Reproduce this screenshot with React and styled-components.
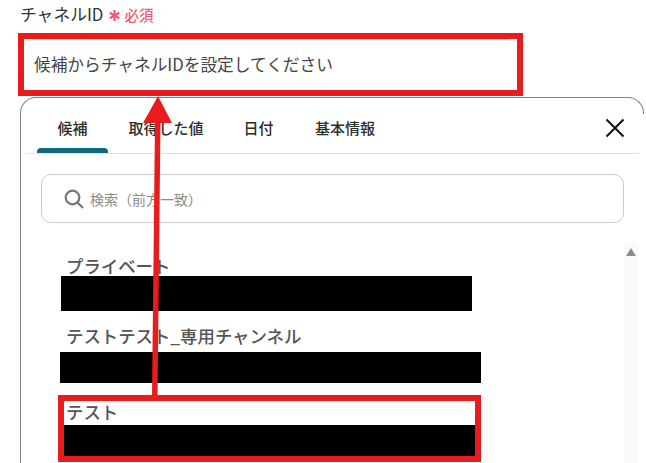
import React from "react";
import styled, { createGlobalStyle } from "styled-components";

const Global = createGlobalStyle`
  html, body { margin: 0; padding: 0; background: #fff; }
  body { width: 646px; height: 463px; overflow: hidden; font-family: "Noto Sans CJK JP", "Noto Sans", sans-serif; }
`;

const Page = styled.div`
  position: relative;
  width: 646px;
  height: 463px;
  overflow: hidden;
  padding: 4px 0 0 18px;
  box-sizing: border-box;
`;

const LabelRow = styled.div`
  display: flex;
  align-items: center;
  height: 22px;
  margin: -1px 0 8px 2px;
  font-size: 16.8px;
  color: #333;
`;

const Star = styled.svg`
  margin: 2px 0 0 6px;
`;

const Required = styled.span`
  color: #f4596f;
  font-size: 14.5px;
  font-weight: 500;
  margin-left: 4px;
`;

const FieldFrame = styled.div`
  width: 505px;
  height: 63px;
  box-sizing: border-box;
  border: 6px solid #e81c1c;
`;

const Field = styled.div`
  height: 100%;
  box-sizing: border-box;
  border-radius: 10px 10px 0 0;
  border-top: 1px solid #dcdcdc;
  padding: 0 0 3px 10px;
  display: flex;
  align-items: center;
  font-size: 16.7px;
  color: #444;
  background: #fff;
`;

const Panel = styled.div`
  position: relative;
  width: 624px;
  height: 380px;
  margin: 1px 0 0 2px;
  box-sizing: border-box;
  border-top: 1px solid #808080;
  border-left: 1px solid #808080;
  border-right: 1px solid #808080;
  border-radius: 16px 16px 0 0;
  padding: 0 4px 0 5px;
  background: #fff;

  &::after {
    content: "";
    position: absolute;
    right: -1px;
    top: 16px;
    bottom: 0;
    width: 1px;
    background: #fff;
  }
`;

const TabBar = styled.div`
  display: flex;
  align-items: stretch;
  height: 55px;
  border-bottom: 1px solid #e2e2e2;
  position: relative;
`;

const Tab = styled.div`
  position: relative;
  display: flex;
  justify-content: center;
  align-items: flex-start;
  padding-top: 19px;
  box-sizing: border-box;
  width: ${(p) => p.$w}px;
  font-size: 15px;
  font-weight: 500;
  color: #2c2c2c;

  ${(p) =>
    p.$active &&
    `&::after {
      content: "";
      position: absolute;
      left: 0;
      right: 0;
      bottom: 0;
      height: 5px;
      background: #0c6b83;
      border-radius: 4px 4px 0 0;
    }`}
`;

const TabSpacer = styled.div`
  width: ${(p) => p.$w}px;
`;

const Close = styled.svg`
  position: absolute;
  right: 14px;
  top: 20px;
`;

const SearchBox = styled.div`
  width: 583px;
  height: 49px;
  margin: 20px 0 0 15px;
  box-sizing: border-box;
  border: 1px solid #cccccc;
  border-radius: 10px;
  display: flex;
  align-items: center;
  padding-left: 22px;
  gap: 6px;
  font-size: 14px;
  color: #8a8a8a;
`;

const ListArea = styled.div`
  position: relative;
  display: flex;
  flex-direction: column;
  padding-top: 32px;
`;

const ListItem = styled.div`
  display: flex;
  flex-direction: column;
  margin-left: ${(p) => p.$left}px;
  margin-top: ${(p) => p.$top}px;
  width: ${(p) => p.$width}px;
`;

const ItemTitle = styled.div`
  font-size: 17.4px;
  font-weight: 500;
  line-height: 22px;
  height: ${(p) => p.$h}px;
  color: #555;
  margin-left: ${(p) => p.$indent}px;
  white-space: nowrap;
`;

const Redacted = styled.div`
  height: ${(p) => p.$h}px;
  background: #000;
`;

const SelectedFrame = styled.div`
  width: 423px;
  height: 67px;
  margin: 12px 0 0 32px;
  box-sizing: border-box;
  border: 6px solid #e81c1c;
  display: flex;
  flex-direction: column;
`;

const Scrollbar = styled.div`
  position: absolute;
  left: 598px;
  top: 20px;
  width: 14px;
  height: 240px;
  background: #fafafa;
  display: flex;
  justify-content: center;
  padding-top: 5px;
  box-sizing: border-box;
`;

const ArrowOverlay = styled.svg`
  position: absolute;
  left: 0;
  top: 0;
  pointer-events: none;
`;

export default function App() {
  return (
    <Page>
      <Global />
      <LabelRow>
        チャネルID
        <Star width="11" height="11" viewBox="0 0 11 11" stroke="#f4596f" strokeWidth="2.2" fill="none">
          <path d="M5.500 0 V11 M0.700 2.700 L10.300 8.300 M10.300 2.700 L0.700 8.300" />
        </Star>
        <Required>必須</Required>
      </LabelRow>
      <FieldFrame>
        <Field>候補からチャネルIDを設定してください</Field>
      </FieldFrame>
      <Panel>
        <TabBar>
          <TabSpacer $w={11} />
          <Tab $w={71} $active>候補</Tab>
          <Tab $w={116}>取得した値</Tab>
          <Tab $w={69}>日付</Tab>
          <Tab $w={104}>基本情報</Tab>
          <Close width="20" height="20" viewBox="0 0 20 20" fill="none" stroke="#111" strokeWidth="2">
            <path d="M1.500 1.500 L18.500 18.500 M18.500 1.500 L1.500 18.500" />
          </Close>
        </TabBar>
        <SearchBox>
          <svg width="20" height="20" viewBox="0 0 20 20" fill="none" stroke="#777" strokeWidth="2.2">
            <circle cx="8.500" cy="8.500" r="6.800" />
            <path d="M13.500 13.500 L19 19" />
          </svg>
          検索（前方一致）
        </SearchBox>
        <ListArea>
          <ListItem $left={35} $top={0} $width={411}>
            <ItemTitle $h={21} $indent={5}>プライベート</ItemTitle>
            <Redacted $h={35} />
          </ListItem>
          <ListItem $left={34} $top={14} $width={421}>
            <ItemTitle $h={27} $indent={6}>テストテスト_専用チャンネル</ItemTitle>
            <Redacted $h={31} />
          </ListItem>
          <SelectedFrame>
            <ItemTitle $h={24} $indent={2}>テスト</ItemTitle>
            <Redacted $h={31} />
          </SelectedFrame>
          <Scrollbar>
            <svg width="10" height="8" viewBox="0 0 10 8" fill="#8c8c8c">
              <path d="M5 0 L10 8 H0 Z" />
            </svg>
          </Scrollbar>
        </ListArea>
      </Panel>
      <ArrowOverlay width="646" height="463" viewBox="0 0 646 463">
        <path d="M152 396 L155 121 H160.500 L157.500 396 Z" fill="#e81c1c" />
        <path d="M158 96 L172 123 H143 Z" fill="#e81c1c" />
      </ArrowOverlay>
    </Page>
  );
}
